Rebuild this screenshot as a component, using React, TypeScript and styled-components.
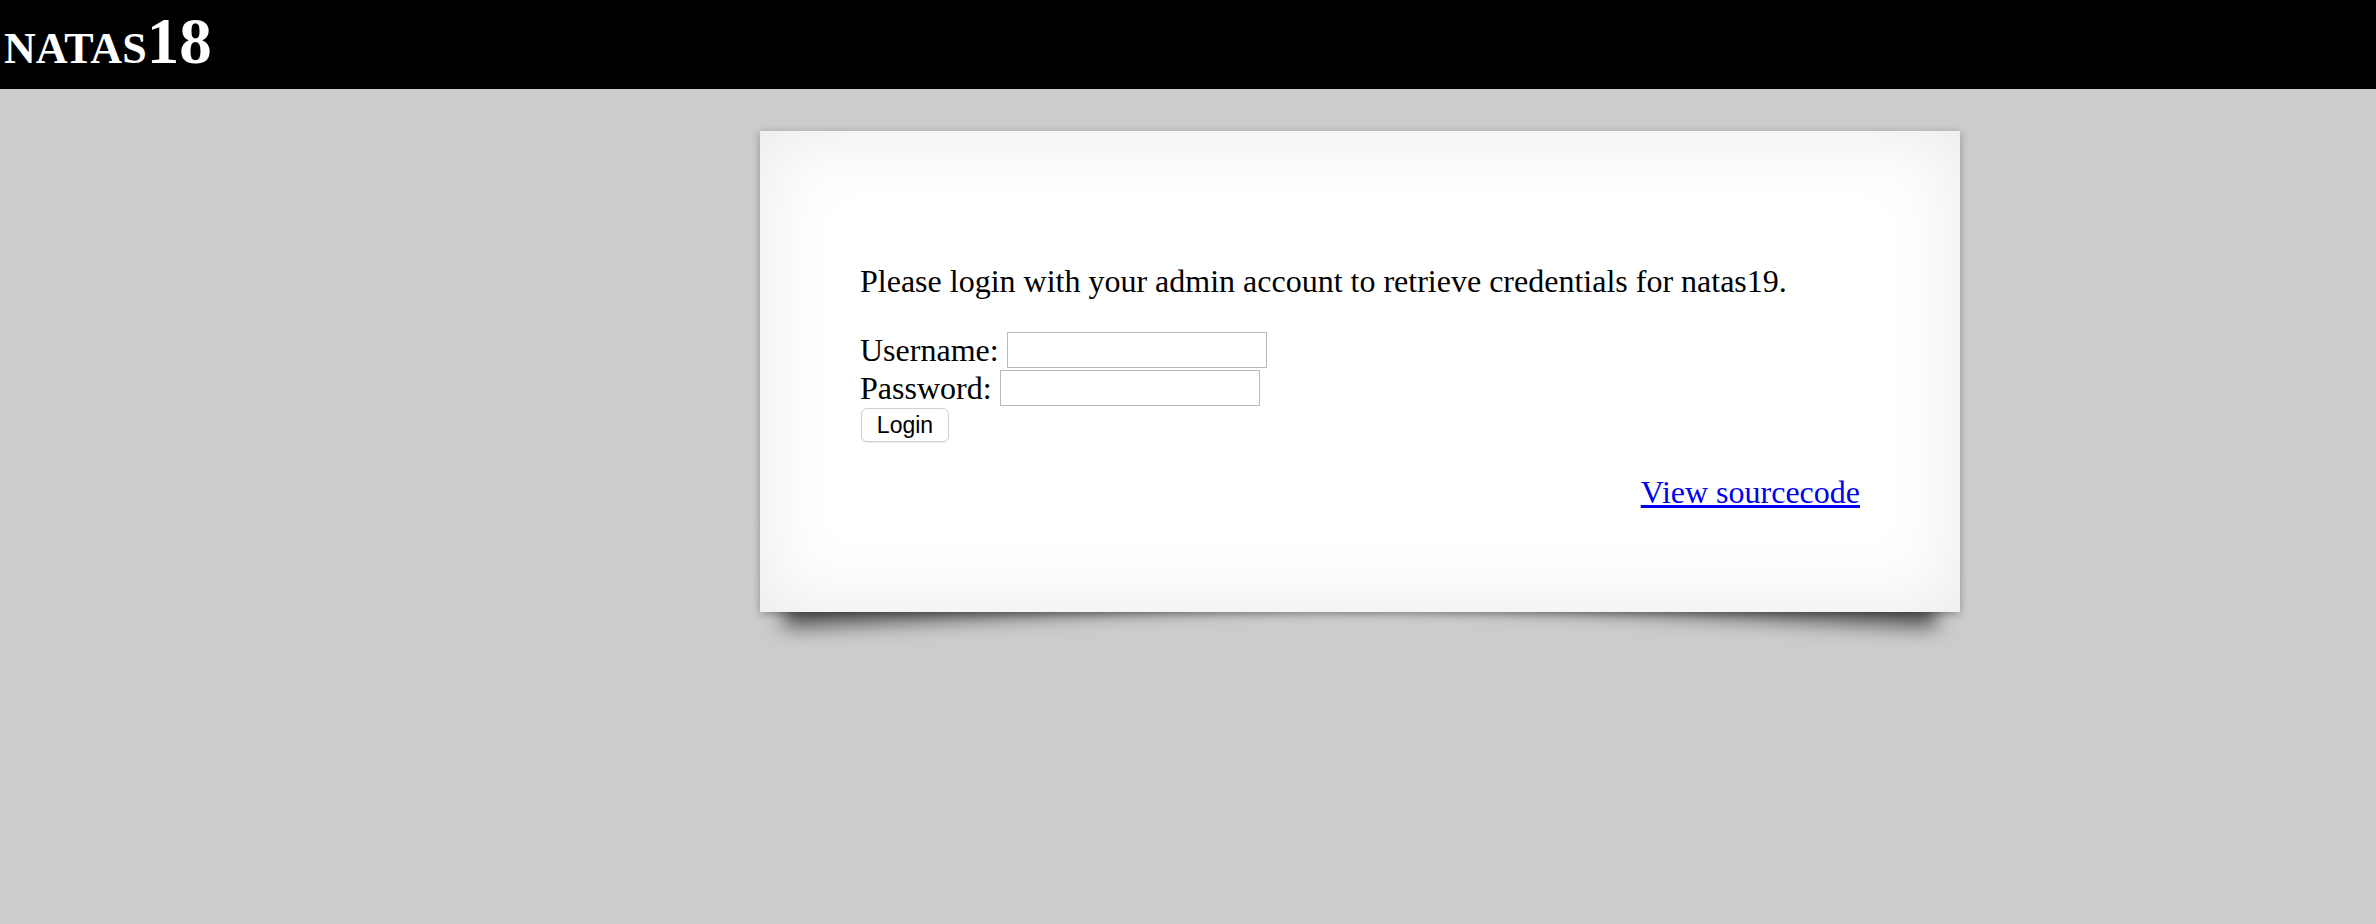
import React from "react";
import styled, { createGlobalStyle } from "styled-components";

const Global = createGlobalStyle`
  html {
    background: #cccccc;
  }
  body {
    margin: 0;
    padding: 0;
    font-family: "Liberation Serif", "Times New Roman", serif;
    color: #000;
  }
  #root {
    min-height: 100vh;
  }
`;

const Header = styled.h1`
  margin: 0;
  box-sizing: border-box;
  height: 89px;
  padding: 9px 4px 0;
  background: #000;
  color: #fff;
  font-family: "Liberation Serif", "Times New Roman", serif;
  font-weight: bold;
  line-height: 1;
  white-space: nowrap;
`;

const Small = styled.span`
  font-size: 44px;
`;

const Big = styled.span`
  font-size: 65px;
`;

const Stage = styled.div`
  position: relative;
  z-index: 0;
  width: 1200px;
  margin: 42px 0 0 760px;

  &::before,
  &::after {
    content: "";
    position: absolute;
    z-index: -1;
    bottom: 30px;
    left: 20px;
    width: 600px;
    height: 96px;
    box-shadow: 0 30px 20px rgba(0, 0, 0, 0.6);
    transform: rotate(-3deg);
  }

  &::after {
    left: auto;
    right: 20px;
    transform: rotate(3deg);
  }
`;

const Card = styled.div`
  position: relative;
  box-sizing: border-box;
  width: 100%;
  padding: 132px 100px 101px;
  background: #fff;
  box-shadow: 0 2px 8px rgba(0, 0, 0, 0.3), inset 0 0 80px rgba(0, 0, 0, 0.09);
  font-size: 32px;
  line-height: 37px;
`;

const Intro = styled.p`
  margin: 0;
`;

const LoginForm = styled.form`
  margin: 31px 0 0;
  display: flex;
  flex-direction: column;
  align-items: flex-start;
`;

const Row = styled.label`
  display: flex;
  align-items: center;
  gap: 8px;
  height: 38px;
`;

const TextInput = styled.input`
  box-sizing: border-box;
  width: 260px;
  height: 36px;
  margin: 0;
  padding: 2px 4px;
  border: 1px solid #b8b8b8;
  background: #fff;
  font-size: 22px;
`;

const Button = styled.button`
  box-sizing: border-box;
  width: 88px;
  height: 34px;
  margin: 1px 0 0 1px;
  padding: 0;
  border: 1px solid #cfcfcf;
  border-radius: 6px;
  background: #fff;
  box-shadow: 0 1px 1px rgba(0, 0, 0, 0.08);
  font-family: "Liberation Sans", Arial, sans-serif;
  font-size: 23px;
  color: #000;
`;

const ViewSource = styled.div`
  margin-top: 32px;
  text-align: right;
`;

const Link = styled.a`
  color: #0000ee;
  text-decoration: underline;
`;

export default function App() {
  return (
    <>
      <Global />
      <Header>
        <Small>NATAS</Small>
        <Big>18</Big>
      </Header>
      <Stage>
        <Card>
          <Intro>
            Please login with your admin account to retrieve credentials for
            natas19.
          </Intro>
          <LoginForm onSubmit={(e) => e.preventDefault()}>
            <Row>
              Username: <TextInput name="username" />
            </Row>
            <Row>
              Password: <TextInput name="password" />
            </Row>
            <Button type="submit">Login</Button>
          </LoginForm>
          <ViewSource>
            <Link href="#">View sourcecode</Link>
          </ViewSource>
        </Card>
      </Stage>
    </>
  );
}
